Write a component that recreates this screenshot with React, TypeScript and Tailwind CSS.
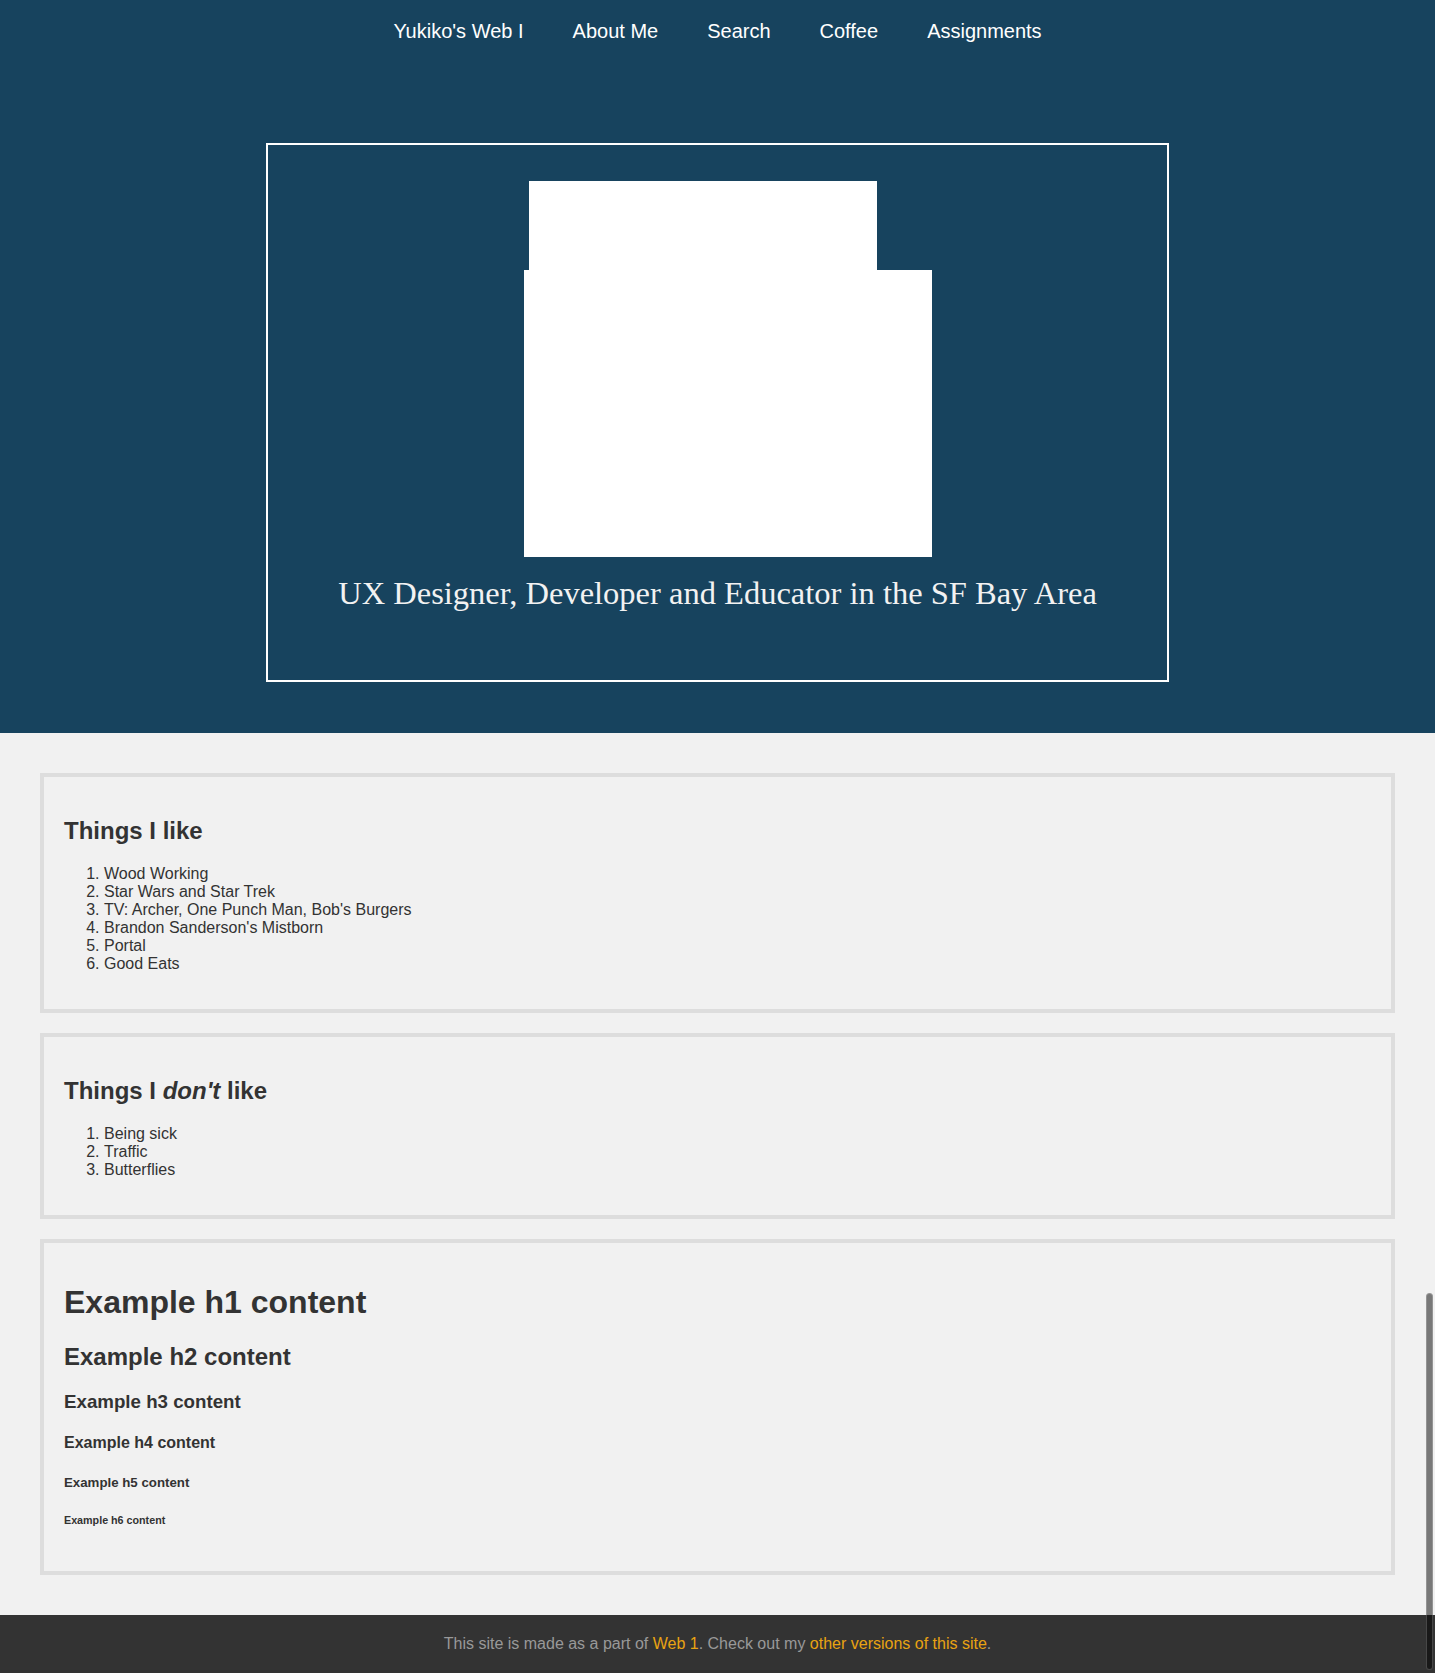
import React from 'react';

const navItems = ["Yukiko's Web I", 'About Me', 'Search', 'Coffee', 'Assignments'];

const likes = [
  'Wood Working',
  'Star Wars and Star Trek',
  "TV: Archer, One Punch Man, Bob's Burgers",
  "Brandon Sanderson's Mistborn",
  'Portal',
  'Good Eats',
];

const dislikes = ['Being sick', 'Traffic', 'Butterflies'];

const Card: React.FC<{ children: React.ReactNode }> = ({ children }) => (
  <section className="border-4 border-[#dddddd] px-5 py-5">{children}</section>
);

const App: React.FC = () => {
  return (
    <div className="min-h-[1673px] bg-[#f1f1f1] font-['Liberation_Sans',Arial,sans-serif] text-[#333333] flex flex-col">
      {/* Header */}
      <header className="bg-[#17435e] h-[733px]">
        <nav className="h-[64px] flex items-center justify-center">
          <ul className="flex gap-[49px]">
            {navItems.map(item => (
              <li key={item}>
                <a href="#" className="text-white text-[20px] leading-[23px]">
                  {item}
                </a>
              </li>
            ))}
          </ul>
        </nav>

        <div className="mx-auto mt-[79px] w-[903px] h-[539px] border-2 border-white pt-[36px]">
          <div className="flex flex-col items-start">
            <div className="ml-[261px] w-[348px] h-[89px] bg-white" />
            <div className="ml-[256px] w-[408px] h-[287px] bg-white" />
          </div>
          <p className="mt-[18px] text-center text-[#f2f2f2] font-['Liberation_Serif','Times_New_Roman',serif] text-[32.5px] leading-[36px]">
            UX Designer, Developer and Educator in the SF Bay Area
          </p>
        </div>
      </header>

      {/* Main */}
      <main className="px-10 pt-10 pb-10 flex flex-col gap-5">
        <Card>
          <h2 className="my-[20px] text-[24px] leading-[28px] font-bold">Things I like</h2>
          <ol className="list-decimal pl-[40px] mt-[20px] mb-4 text-[16px] leading-[18px]">
            {likes.map(l => (
              <li key={l}>{l}</li>
            ))}
          </ol>
        </Card>

        <Card>
          <h2 className="my-[20px] text-[24px] leading-[28px] font-bold">
            Things I <em className="italic">don't</em> like
          </h2>
          <ol className="list-decimal pl-[40px] mt-[20px] mb-4 text-[16px] leading-[18px]">
            {dislikes.map(l => (
              <li key={l}>{l}</li>
            ))}
          </ol>
        </Card>

        <Card>
          <h1 className="mt-[20px] text-[32px] leading-[38px] font-bold">Example h1 content</h1>
          <h2 className="mt-[22px] text-[24px] leading-[28px] font-bold">Example h2 content</h2>
          <h3 className="mt-[20px] text-[18.72px] leading-[21px] font-bold">Example h3 content</h3>
          <h4 className="mt-[22px] text-[16px] leading-[18px] font-bold">Example h4 content</h4>
          <h5 className="mt-[23px] text-[13.28px] leading-[15px] font-bold">Example h5 content</h5>
          <h6 className="mt-[24px] mb-[25px] text-[10.72px] leading-[12px] font-bold">Example h6 content</h6>
        </Card>
      </main>

      {/* Footer */}
      <footer className="bg-[#333333] h-[58px] flex items-center justify-center text-[16px] text-[#999999] mt-auto">
        <p>
          This site is made as a part of <a href="#" className="text-[#e9a312]">Web 1</a>. Check out my{' '}
          <a href="#" className="text-[#e9a312]">other versions of this site</a>.
        </p>
      </footer>

      {/* overlay scrollbar thumb */}
      <div className="absolute left-[1426px] top-[1293px] w-[7px] h-[377px] rounded-full bg-black/50 border border-white/20" />
    </div>
  );
};

export default App;
